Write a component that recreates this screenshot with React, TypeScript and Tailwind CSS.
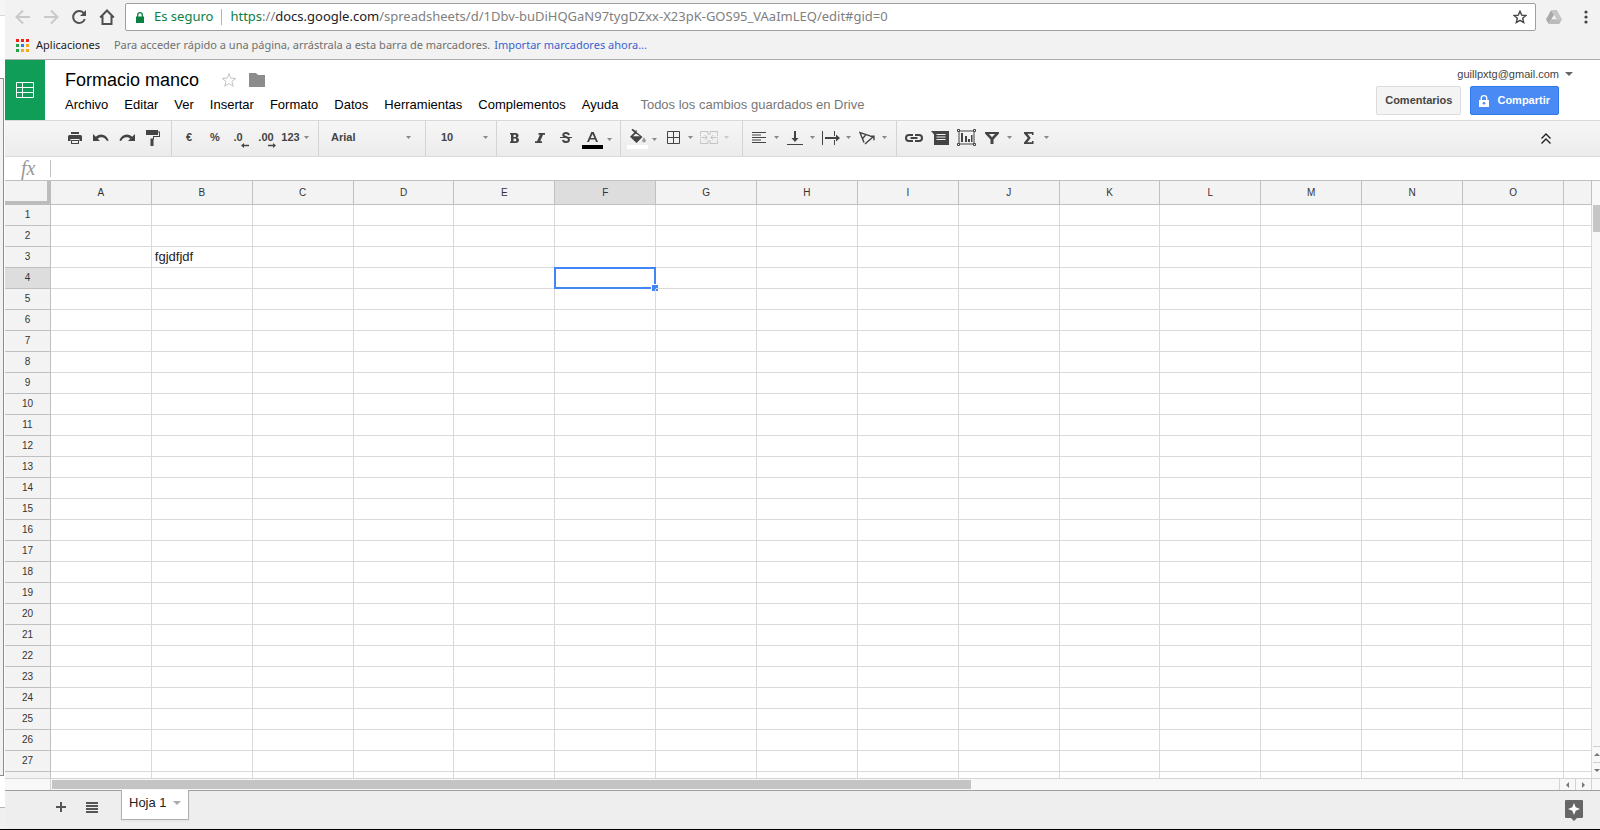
import type { ReactNode } from 'react'

const COLUMNS = ['A', 'B', 'C', 'D', 'E', 'F', 'G', 'H', 'I', 'J', 'K', 'L', 'M', 'N', 'O']
const ROWS = Array.from({ length: 27 }, (_, i) => i + 1)
const MENUS = ['Archivo', 'Editar', 'Ver', 'Insertar', 'Formato', 'Datos', 'Herramientas', 'Complementos', 'Ayuda']
const APP_DOTS = [
  'bg-[#ea2318]', 'bg-[#ea2318]', 'bg-[#ea2318]',
  'bg-[#22a14b]', 'bg-[#2b7de9]', 'bg-[#f5ab1c]',
  'bg-[#22a14b]', 'bg-[#f5ab1c]', 'bg-[#f5ab1c]',
]

const CELLS: Record<string, string> = { B3: 'fgjdfjdf' }
const ACTIVE = { col: 'F', row: 4 }

type IconProps = { size?: number; w?: number; h?: number; className?: string; children: ReactNode }

function Icon({ size = 18, w, h, className = 'fill-[#444]', children }: IconProps) {
  const width = w ?? size
  const height = h ?? size
  return (
    <svg width={width} height={height} viewBox={`0 0 ${width} ${height}`} className={`shrink-0 ${className}`} aria-hidden="true">
      {children}
    </svg>
  )
}

function Caret({ className = 'fill-[#888]' }: { className?: string }) {
  return <Icon w={5} h={3} className={className}><path d="M0 0h5L2.5 3z" /></Icon>
}

function Tool({ label, children }: { label: string; children: ReactNode }) {
  return (
    <button type="button" aria-label={label} className="flex h-7 w-[26px] items-center justify-center text-[11px] font-bold text-[#444]">
      {children}
    </button>
  )
}

function DropTool({ label, muted, low, children }: { label: string; muted?: boolean; low?: boolean; children: ReactNode }) {
  return (
    <button type="button" aria-label={label} aria-haspopup="menu" className="flex h-7 w-[35px] items-center">
      <span className="flex w-[26px] justify-center">{children}</span>
      <span className={`flex w-[9px] justify-center ${low ? 'pt-1' : ''}`}>
        <Caret className={muted ? 'fill-[#ccc]' : 'fill-[#888]'} />
      </span>
    </button>
  )
}

function Group({ className, children }: { className: string; children: ReactNode }) {
  return <div className={`flex shrink-0 items-center border-r border-[#d4d4d4] pb-0.5 ${className}`}>{children}</div>
}

function BrowserBar() {
  return (
    <div className="border-b border-[#acacac] bg-[#f2f2f2] font-['Noto_Sans','Open_Sans',sans-serif]">
      <div className="flex items-center pt-[3px]">
        <div className="flex w-[120px] items-center pl-1">
          <button type="button" aria-label="Atrás" className="flex w-7 justify-center">
            <Icon size={16} className="fill-none stroke-[#c9c9c9] stroke-2"><path d="M15 8H2M8 1.500L1.500 8 8 14.500" /></Icon>
          </button>
          <button type="button" aria-label="Adelante" className="flex w-7 justify-center">
            <Icon size={16} className="fill-none stroke-[#c9c9c9] stroke-2"><path d="M1 8h13M8 1.500L14.500 8 8 14.500" /></Icon>
          </button>
          <button type="button" aria-label="Volver a cargar" className="flex w-7 justify-center">
            <Icon size={16} className="fill-none stroke-[#505050] stroke-2">
              <path d="M13 4.500A6 6 0 1 0 13.800 10" />
              <path d="M15 1v6H9z" className="fill-[#505050] stroke-none" />
            </Icon>
          </button>
          <button type="button" aria-label="Página principal" className="flex w-7 justify-center">
            <Icon size={16} className="fill-none stroke-[#505050] stroke-2"><path d="M1.200 8.500L8 1.500l6.800 7M3.500 7v8h9V7" /></Icon>
          </button>
        </div>
        <div className="flex h-7 flex-1 items-center rounded-xs border border-[#a0a0a0] bg-white pr-2 pl-2.5">
          <Icon w={8} h={11} className="fill-[#0b8043]">
            <path d="M0 4.500h8V11H0z" />
            <path d="M1.700 5V3a2.300 2.300 0 0 1 4.600 0v2" className="fill-none stroke-[#0b8043] stroke-[1.300]" />
          </Icon>
          <span className="ml-2.5 text-[13px] text-[#0b8043]">Es seguro</span>
          <span className="mx-2 h-4 w-px bg-[#b5b5b5]" />
          <div role="textbox" aria-label="Dirección" className="flex-1 truncate text-[13px] text-[#808080]">
            <span className="text-[#0b8043]">https</span>://<span className="text-[#222]">docs.google.com</span>/spreadsheets/d/1Dbv-buDiHQGaN97tygDZxx-X23pK-GOS95_VAaImLEQ/edit#gid=0
          </div>
          <button type="button" aria-label="Añadir a marcadores">
            <Icon size={14} className="fill-none stroke-[#444] stroke-[1.400]">
              <path d="M7 1.200l1.700 3.900 4.200.4-3.200 2.800 1 4.200L7 10.300l-3.700 2.200 1-4.200L1.100 5.500l4.200-.4z" />
            </Icon>
          </button>
        </div>
        <button type="button" aria-label="Google Drive" className="ml-2.5">
          <Icon w={16} h={14} className="fill-[#bbb]">
            <path d="M5.300 0L0 9.200 2.700 14 8 4.700z" className="fill-[#a9a9a9]" />
            <path d="M5.300 0h5.400L16 9.200h-5.300z" className="fill-[#c6c6c6]" />
            <path d="M5.400 9.200H16L13.300 14H2.700z" />
          </Icon>
        </button>
        <button type="button" aria-label="Menú" className="mr-3 ml-[22px]">
          <Icon w={4} h={14} className="fill-[#444]">
            <circle cx="2" cy="2" r="1.600" /><circle cx="2" cy="7" r="1.600" /><circle cx="2" cy="12" r="1.600" />
          </Icon>
        </button>
      </div>

      {/* Bookmarks */}
      <div className="flex h-7 items-center pl-[11px] text-[11px]">
        <button type="button" className="flex items-center gap-[7px] text-[#222]">
          <span className="grid grid-cols-3 gap-0.5">
            {APP_DOTS.map((color, i) => <span key={i} className={`size-[3px] ${color}`} />)}
          </span>
          Aplicaciones
        </button>
        <span className="ml-3.5 text-[#707070]">Para acceder rápido a una página, arrástrala a esta barra de marcadores.</span>
        <a href="#importar" className="ml-1 text-[#3a62d0]">Importar marcadores ahora...</a>
      </div>
    </div>
  )
}

function DocHeader() {
  return (
    <header className="flex h-[60px] bg-white">
      <a href="#inicio" aria-label="Hojas de cálculo" className="flex w-10 shrink-0 items-center justify-center bg-[#0f9d58]">
        <Icon w={20} h={16} className="fill-none stroke-white">
          <path d="M1.500.5h17v15h-17zM1.500 5.500h17M1.500 10.500h17M7.500.5v15" />
        </Icon>
      </a>
      <div className="ml-5 flex-1 pt-2">
        <div className="flex h-6 items-center">
          <h1 className="text-lg text-black">Formacio manco</h1>
          <button type="button" aria-label="Destacar" className="ml-[22px]">
            <Icon size={16} className="fill-none stroke-[#c4c4c4]">
              <path d="M8 1.500l1.800 4.700 5 .2-3.900 3.100 1.400 4.800L8 11.500l-4.300 2.800 1.400-4.800-3.900-3.100 5-.2z" />
            </Icon>
          </button>
          <button type="button" aria-label="Mover a carpeta" className="ml-3">
            <Icon w={16} h={14} className="fill-[#8c8c8c]"><path d="M0 0h7l2 2h7v12H0z" /></Icon>
          </button>
        </div>
        <nav className="flex h-[26px] items-center gap-4 text-[13px] text-black">
          {MENUS.map(menu => <button key={menu} type="button">{menu}</button>)}
          <span className="ml-1.5 text-[#777]">Todos los cambios guardados en Drive</span>
        </nav>
      </div>
      <div className="mr-[27px] flex flex-col items-end pt-1.5">
        <button type="button" className="flex h-4 items-center gap-1.5 text-[11px] text-[#444]">
          guillpxtg@gmail.com
          <Icon w={8} h={4} className="fill-[#666]"><path d="M0 0h8L4 4z" /></Icon>
        </button>
        <div className="mt-1 mr-3.5 flex gap-[9px] text-[11px] font-bold">
          <button type="button" className="h-[29px] rounded-xs border border-[#dcdcdc] bg-[#f4f4f4] px-2 text-[#444]">Comentarios</button>
          <button type="button" className="flex h-[29px] items-center gap-2 rounded-xs border border-[#3079ed] bg-[#4a8af4] px-2 text-white">
            <Icon w={10} h={12} className="fill-white">
              <path d="M0 5h10v7H0z" />
              <path d="M2.200 5V3.500a2.800 2.800 0 0 1 5.600 0V5" className="fill-none stroke-white stroke-[1.300]" />
              <circle cx="5" cy="8.300" r="1.300" className="fill-[#4a8af4]" />
            </Icon>
            Compartir
          </button>
        </div>
      </div>
    </header>
  )
}

function Toolbar() {
  return (
    <div className="flex h-[37px] border-y border-[#d9d9d9] bg-linear-to-b from-[#f6f6f6] to-[#ececec]">
      <Group className="w-[167px] pl-[57px]">
        <Tool label="Imprimir">
          <Icon w={14} h={12}><path d="M3 0h8v2H3zM1.500 3h11A1.500 1.500 0 0 1 14 4.500V9h-2.500V7h-9v2H0V4.500A1.500 1.500 0 0 1 1.500 3zM3 8h8v4H3zm1 1v2h6V9z" fillRule="evenodd" /></Icon>
        </Tool>
        <Tool label="Deshacer">
          <Icon w={16} h={9}><path d="M0 1v7h7L4.700 5.700C8 3 12 4 14 8l1.700-.6C13.500 1.500 7.500-.5 2.800 3.800z" /></Icon>
        </Tool>
        <Tool label="Rehacer">
          <Icon w={16} h={9}><path d="M16 1v7H9l2.300-2.300C8 3 4 4 2 8L.3 7.400C2.500 1.500 8.500-.5 13.200 3.800z" /></Icon>
        </Tool>
        <Tool label="Copiar formato">
          <Icon w={14} h={16}><path d="M0 0h12v1.500h2V7H8v2.500h-.5V16h-3V8.500H7V6h6V2.500h-1V5H0z" /></Icon>
        </Tool>
      </Group>

      <Group className="w-[147px] pl-1">
        <Tool label="Moneda">€</Tool>
        <Tool label="Porcentaje">%</Tool>
        <Tool label="Reducir decimales">
          <span className="relative pr-1.5">.0
            <span className="absolute right-0 -bottom-0.5"><Icon w={8} h={5}><path d="M3 0v1.700h5v1.500H3V5L0 2.500z" /></Icon></span>
          </span>
        </Tool>
        <Tool label="Aumentar decimales">
          <span className="relative pr-0.5">.00
            <span className="absolute right-0 -bottom-0.5"><Icon w={8} h={5}><path d="M5 0v1.700H0v1.500h5V5l3-2.500z" /></Icon></span>
          </span>
        </Tool>
        <button type="button" className="flex w-[30px] items-center justify-center gap-1 text-[11px] font-bold text-[#444]">
          123 <Caret />
        </button>
      </Group>

      <Group className="relative w-[107px]">
        <select aria-label="Fuente" className="h-7 w-full appearance-none pl-3 text-[11px] font-bold text-[#444]">
          <option>Arial</option>
        </select>
        <span className="pointer-events-none absolute right-3.5"><Caret /></span>
      </Group>
      <Group className="relative w-[71px]">
        <select aria-label="Tamaño de fuente" className="h-7 w-full appearance-none pl-[15px] text-[11px] font-bold text-[#444]">
          <option>10</option>
        </select>
        <span className="pointer-events-none absolute right-2"><Caret /></span>
      </Group>

      <Group className="w-[124px] pl-1">
        <Tool label="Negrita"><Icon w={9} h={10}><path d="M0 0h5.500C7.500 0 8.500 1 8.500 2.600c0 1-.5 1.700-1.300 2.100C8.300 5 9 5.900 9 7.100 9 8.900 7.700 10 5.600 10H0V8.500h1v-7H0zm3.500 1.700V4h1.400C5.600 4 6 3.600 6 2.900s-.4-1.200-1.100-1.200zm0 3.800v2.700H5c.9 0 1.300-.5 1.300-1.300S5.900 5.500 5 5.500z" fillRule="evenodd" /></Icon></Tool>
        <Tool label="Cursiva"><Icon w={10} h={10}><path d="M3.500 0H10v1.800H8L5.200 8.200H7V10H0V8.200h2L4.900 1.800H3.500z" /></Icon></Tool>
        <Tool label="Tachado">
          <Icon w={12} h={11} className="fill-none stroke-[#444] stroke-2">
            <path d="M9 3C8.500 1.500 7.500 1 6 1 4.300 1 3.300 1.800 3.300 2.900c0 2.500 5.700 1.600 5.700 4.600C9 9 7.800 10 6 10 4.300 10 3.200 9.300 3 7.800" />
            <path d="M0 5.500h12" className="stroke-1" />
          </Icon>
        </Tool>
        <DropTool label="Color de texto" low>
          <Icon w={21} h={22}>
            <path d="M9.300 5h2.400L16 15h-2l-1-2.500H8L7 15H5zm1.200 2L8.700 11h3.600z" fillRule="evenodd" />
            <path d="M0 18h21v4H0z" className="fill-black" />
          </Icon>
        </DropTool>
      </Group>

      <Group className="w-[122px] gap-px pl-[3px]">
        <DropTool label="Color de relleno" low>
          <Icon w={21} h={22}>
            <path d="M4.500 3l1.200-1.200L15.500 10 9.500 16 3 9.800 7.300 5.500z" />
            <path d="M8.800 6.500L6 9.200h7z" className="fill-[#f1f1f1]" />
            <path d="M9 3v4" className="stroke-[#444]" />
            <path d="M17 10.500c1.200 1.600 1.800 2.400 1.800 3.300a1.800 1.800 0 0 1-3.600 0c0-.9.600-1.700 1.800-3.300z" className="fill-[#999]" />
            <path d="M0 18h21v4H0z" className="fill-white" />
          </Icon>
        </DropTool>
        <DropTool label="Bordes">
          <Icon size={13} className="fill-none stroke-[#444]"><path d="M.5.5h12v12H.5zM6.500.5v12M.5 6.500h12" /></Icon>
        </DropTool>
        <DropTool label="Combinar celdas" muted>
          <Icon w={18} h={13} className="fill-none stroke-[#c4c4c4]">
            <path d="M8 .5H.5v3M.5 9.500v3H8V9M8 .5V4M10 .5h7.500v3M17.500 9.500v3H10V9M10 .5V4" />
            <path d="M.5 4v5M17.500 4v5" strokeDasharray="1 1" />
            <path d="M1.500 6.500H7M4.800 4L7.200 6.500 4.800 9M16.500 6.500H11M13.200 4l-2.400 2.500L13.200 9" />
          </Icon>
        </DropTool>
      </Group>

      <Group className="w-[154px] gap-px pl-[3px]">
        <DropTool label="Alineación horizontal">
          <Icon w={14} h={11}><path d="M0 0h14v1H0zM0 2.500h9v1H0zM0 5h14v1H0zM0 7.500h9v1H0zM0 10h14v1H0z" /></Icon>
        </DropTool>
        <DropTool label="Alineación vertical">
          <Icon w={16} h={14}><path d="M7 0h2v7h2.500L8 11 4.500 7H7zM0 13h16v1H0z" /></Icon>
        </DropTool>
        <DropTool label="Ajuste de texto">
          <Icon w={18} h={14}><path d="M0 0h1v14H0zM12 0h1v5h-1zM12 9h1v5h-1zM3 6h11V3.500L18 7l-4 3.500V8H3z" /></Icon>
        </DropTool>
        <DropTool label="Rotación de texto">
          <Icon w={16} h={14} className="fill-none stroke-[#444] stroke-[1.400]">
            <path d="M5 11.500L1 1.500l10 3.300M3.700 7.500L7 3.600M6 13L14.500 5.500M11 5.200h4v4" />
          </Icon>
        </DropTool>
      </Group>

      <div className="flex items-center pb-0.5 pl-1">
        <Tool label="Insertar enlace">
          <Icon w={18} h={8} className="fill-none stroke-[#444] stroke-2"><path d="M8 1H4a3 3 0 0 0 0 6h4M10 1h4a3 3 0 0 1 0 6h-4M5.500 4h7" /></Icon>
        </Tool>
        <Tool label="Insertar comentario">
          <Icon w={18} h={14}><path d="M0 0h18v14H3V3.500zM5.500 3v1h9V3zm0 2.500v1h9v-1zm0 2.500v1h9V8z" fillRule="evenodd" /></Icon>
        </Tool>
        <Tool label="Insertar gráfico">
          <Icon w={19} h={17} className="fill-none stroke-[#444]">
            <path d="M2 2h15v13H2z" />
            <path d="M.5.5h2v2h-2zM16.500.5h2v2h-2zM.5 14.500h2v2h-2zM16.500 14.500h2v2h-2z" className="fill-[#f1f1f1]" />
            <path d="M4 4h2v9H4zM8 7h2v6H8zM11 10h2v3h-2zM14 6h1.500v7H14z" className="fill-[#444] stroke-none" />
          </Icon>
        </Tool>
        <DropTool label="Filtro">
          <Icon w={14} h={12}><path d="M0 0h14v1.500L8.500 7.500V12h-3V7.500L0 1.500zM4 2l3 3.300L10 2z" fillRule="evenodd" /></Icon>
        </DropTool>
        <span className="w-0.5" />
        <DropTool label="Funciones">
          <Icon w={10} h={12}><path d="M0 0h9.500v3H8V1.800H3.500L6.700 6l-3.400 4.200H8V9h1.500v3H0v-1.500L3.800 6 0 1.500z" /></Icon>
        </DropTool>
      </div>
      <button type="button" aria-label="Ocultar menús" className="mr-[49px] ml-auto">
        <Icon w={10} h={11} className="fill-none stroke-[#222] stroke-[1.400]"><path d="M.5 5.500L5 1l4.500 4.500M.5 10.500L5 6l4.500 4.500" /></Icon>
      </button>
    </div>
  )
}

function Sheet() {
  return (
    <div className="flex min-h-0 flex-1 border-t border-[#c0c0c0]">
      <div className="min-w-0 flex-1 overflow-hidden">
        <table className="w-full table-fixed border-separate border-spacing-0 text-[10px] text-[#333]">
          <colgroup>
            <col className="w-[46px]" />
            {COLUMNS.map(col => <col key={col} />)}
            <col className="w-7" />
          </colgroup>
          <thead>
            <tr className="h-6 bg-[#f3f3f3]">
              <td className="border-r-4 border-b-4 border-[#bcbcbc]" />
              {COLUMNS.map(col => (
                <th
                  key={col}
                  scope="col"
                  className={`border-r border-b border-[#c0c0c0] p-0 font-normal ${col === ACTIVE.col ? 'bg-[#ddd]' : ''}`}
                >
                  {col}
                </th>
              ))}
              <td className="border-r border-b border-[#c0c0c0]" />
            </tr>
          </thead>
          <tbody>
            {ROWS.map(row => (
              <tr key={row} className="h-[21px]">
                <th
                  scope="row"
                  className={`border-r border-b border-[#c0c0c0] p-0 font-normal leading-5 ${row === ACTIVE.row ? 'bg-[#ddd]' : 'bg-[#f3f3f3]'}`}
                >
                  {row}
                </th>
                {COLUMNS.map(col => {
                  const active = col === ACTIVE.col && row === ACTIVE.row
                  return (
                    <td key={col} className="relative border-r border-b border-[#dadada] p-0 pl-[3px] text-[13px] leading-5 text-[#222]">
                      {CELLS[`${col}${row}`]}
                      {active && (
                        <span className="absolute -inset-px border-2 border-[#4285f4]">
                          <span className="absolute -right-1 -bottom-1 size-[7px] border-t border-l border-white bg-[#4285f4]" />
                        </span>
                      )}
                    </td>
                  )
                })}
                <td className="border-r border-b border-[#dadada] p-0" />
              </tr>
            ))}
            {/* Part of the next row, under the scrollbar */}
            <tr className="h-[21px]">
              <td className="border-r border-[#c0c0c0] bg-[#f3f3f3]" />
              {COLUMNS.map(col => <td key={col} className="border-r border-[#dadada]" />)}
              <td className="border-r border-[#dadada]" />
            </tr>
          </tbody>
        </table>
      </div>

      {/* Vertical scrollbar */}
      <div className="flex w-2 flex-col bg-[#f8f8f8] pl-px">
        <div className="mt-6 h-[27px] bg-[#c6c6c6]" />
        <button type="button" aria-label="Subir" className="mt-auto flex h-4 items-center justify-center border-t border-[#d0d0d0]">
          <Icon w={6} h={3} className="fill-[#777]"><path d="M0 3h6L3 0z" /></Icon>
        </button>
        <button type="button" aria-label="Bajar" className="flex h-4 items-center justify-center border-t border-[#d0d0d0]">
          <Icon w={6} h={3} className="fill-[#777]"><path d="M0 0h6L3 3z" /></Icon>
        </button>
      </div>
    </div>
  )
}

function SheetTabs() {
  return (
    <footer>
      {/* Horizontal scrollbar */}
      <div className="flex h-3 border-t border-[#d4d4d4] bg-[#f8f8f8]">
        <div className="w-[46px] border-r border-[#d4d4d4]" />
        <div className="flex-1 pt-px pl-px">
          <div className="h-[9px] w-[61%] bg-[#c4c4c4]" />
        </div>
        <button type="button" aria-label="Izquierda" className="flex w-4 items-center justify-center border-l border-[#d4d4d4]">
          <Icon w={3} h={6} className="fill-[#777]"><path d="M3 0v6L0 3z" /></Icon>
        </button>
        <button type="button" aria-label="Derecha" className="flex w-4 items-center justify-center border-l border-[#d4d4d4]">
          <Icon w={3} h={6} className="fill-[#777]"><path d="M0 0v6l3-3z" /></Icon>
        </button>
        <div className="w-[9px] border-l border-[#d4d4d4]" />
      </div>
      <div className="flex h-10 items-start border-t border-b border-t-[#a0a0a0] border-b-black bg-[#eee]">
        <button type="button" aria-label="Añadir hoja" className="mt-[11px] ml-[51px]">
          <Icon w={10} h={10} className="fill-[#555]"><path d="M4 0h2v4h4v2H6v4H4V6H0V4h4z" /></Icon>
        </button>
        <button type="button" aria-label="Todas las hojas" className="mt-[11px] ml-5">
          <Icon w={12} h={11} className="fill-[#555]"><path d="M0 0h12v2H0zM0 3h12v2H0zM0 6h12v2H0zM0 9h12v2H0z" /></Icon>
        </button>
        <button type="button" className="-mt-px ml-[23px] flex h-[30px] items-center gap-1.5 border border-t-0 border-[#b0b0b0] bg-white px-[7px] pb-1 text-[13px] text-[#222] shadow-xs">
          Hoja 1
          <Icon w={8} h={4} className="fill-[#aaa]"><path d="M0 0h8L4 4z" /></Icon>
        </button>
        <button type="button" aria-label="Explorar" className="mt-[9px] mr-[17px] ml-auto">
          <Icon w={18} h={21} className="fill-[#666]">
            <path d="M1 0h16a1 1 0 0 1 1 1v16a1 1 0 0 1-1 1h-5l-3 3-3-3H1a1 1 0 0 1-1-1V1a1 1 0 0 1 1-1z" />
            <path d="M9 3l1.700 4.300L15 9l-4.300 1.700L9 15l-1.700-4.300L3 9l4.300-1.700z" className="fill-white" />
          </Icon>
        </button>
      </div>
    </footer>
  )
}

export default function App() {
  return (
    <div className="flex h-screen min-h-[400px] bg-white font-['Liberation_Sans',Arial,sans-serif] [&_button]:cursor-pointer [&_button]:whitespace-nowrap">
      {/* Edge of the window behind */}
      <div className="flex w-[5px] shrink-0 flex-col">
        <div className="h-4 border-b border-[#d8d8d8] bg-[#f5f5f5]" />
        <div className="h-[62px]" />
        <div className="mr-px flex-1 border-y border-r border-[#8c8c8c] bg-[#f2f2f2]" />
        <div className="h-8 border-b border-[#b5b5b5]" />
        <div className="h-[22px] border-b border-black bg-[#f0f0f0]" />
      </div>

      <main className="flex min-w-0 flex-1 flex-col">
        <BrowserBar />
        <DocHeader />
        <Toolbar />
        <div className="flex h-[23px] items-center bg-white">
          <label htmlFor="formula" className="w-[45px] pb-0.5 pl-4 font-['Liberation_Serif',serif] text-xl leading-5 text-[#999] italic">fx</label>
          <input id="formula" type="text" className="h-[17px] flex-1 border-l border-[#c0c0c0] px-1 text-[13px] outline-none" />
        </div>
        <Sheet />
        <SheetTabs />
      </main>
    </div>
  )
}
